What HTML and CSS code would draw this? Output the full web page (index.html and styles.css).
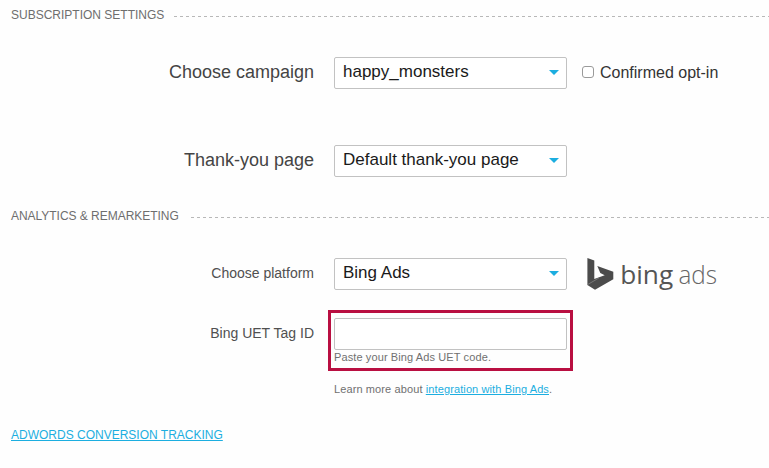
FILE: index.html
```html
<!DOCTYPE html>
<html>

<head>
    <meta charset="utf-8">
    <title>Subscription settings</title>
    <link rel="stylesheet" href="styles.css">
</head>

<body>
    <form autocomplete="off">
        <h2 class="section-title">SUBSCRIPTION SETTINGS</h2>
        <div class="row campaign">
            <label class="name">Choose campaign</label>
            <div class="select">happy_monsters<span class="arrow"></span></div>
            <label class="check"><input type="checkbox" id="optin">Confirmed opt-in</label>
        </div>
        <div class="row thanks">
            <label class="name">Thank-you page</label>
            <div class="select">Default thank-you page<span class="arrow"></span></div>
        </div>

        <h2 class="section-title analytics">ANALYTICS &amp; REMARKETING</h2>
        <div class="row platform small">
            <label class="name">Choose platform</label>
            <div class="select">Bing Ads<span class="arrow"></span></div>
            <svg class="bing" width="134" height="36" viewBox="0 0 134 36">
                <path d="M0.4 1 L7.3 3.6 V22 L17.7 18.2 L13.3 16 L10.3 9 L26.3 14.8 V22.3 L8 32.8 L0.4 28 Z" fill="#4b4b4b"/>
                <path d="M0.6 27.6 L12 20.9" stroke="#8a8a8a" stroke-width="0.7"/>
                <text x="33.2" y="26.5" font-size="25.5" textLength="53" lengthAdjust="spacingAndGlyphs" fill="#555">bing</text>
                <text class="light" x="91.4" y="26.5" font-size="25.5" textLength="38.6" lengthAdjust="spacingAndGlyphs" fill="#666">ads</text>
            </svg>
        </div>
        <div class="row tag small">
            <label class="name" for="uet">Bing UET Tag ID</label>
            <div class="highlight">
                <input type="text" id="uet">
                <p class="hint">Paste your Bing Ads UET code.</p>
            </div>
        </div>
        <p class="hint more">Learn more about <a href="#">integration with Bing Ads</a>.</p>

        <a class="adwords" href="#">ADWORDS CONVERSION TRACKING</a>
    </form>
</body>

</html>
```
FILE: styles.css
```css
body{
    margin: 0;
    background-color: #fefefe;
    color: #444;
    font-family: "Liberation Sans", Arial, sans-serif;
    overflow: hidden;
}

form{
    padding: 5px 0 0 11px;
}

.section-title{
    display: flex;
    align-items: center;
    gap: 10px;
    height: 20px;
    margin: 0;
    font-size: 12px;
    font-weight: normal;
    color: #6e6e6e;
}

.section-title::after{
    content: "";
    flex: 1;
    height: 1px;
    margin-top: 3px;
    background: repeating-linear-gradient(to right, #b8b8b8 0 3px, transparent 3px 6px);
}

.analytics{
    gap: 12px;
    letter-spacing: -0.03px;
}

.row{
    display: flex;
    align-items: flex-start;
}

.campaign{
    margin-top: 32px;
}

.thanks{
    margin-top: 56px;
    margin-bottom: 29px;
}

.platform{
    margin-top: 32px;
    height: 32px;
}

.tag{
    margin-top: 20px;
}

.name{
    width: 303px;
    margin-right: 20px;
    line-height: 30px;
    font-size: 18px;
    text-align: right;
}

.small .name{
    font-size: 14px;
    color: #505050;
}

.tag .name{
    margin-top: 8px;
    margin-right: 14px;
}

.select{
    display: flex;
    align-items: center;
    justify-content: space-between;
    box-sizing: border-box;
    width: 233px;
    height: 32px;
    padding: 0 7px 2px 8px;
    border: 1px solid #c2c2c2;
    border-radius: 2px;
    background-color: #fff;
    font-size: 17px;
    color: #1a1a1a;
}

.arrow{
    border: 5px solid transparent;
    border-top-color: #1caee0;
    border-bottom: none;
}

.check{
    display: flex;
    align-items: center;
    height: 31px;
    margin-left: 15px;
    font-size: 16px;
    color: #333;
}

.check input{
    appearance: none;
    width: 12px;
    height: 12px;
    margin: 0 6px 1px 0;
    border: 1px solid #9a9a9a;
    border-radius: 3px;
    background-color: #fff;
}

.bing{
    margin: -1px 0 0 20px;
    font-family: "Open Sans", sans-serif;
}

.bing .light{
    font-weight: 300;
}

.highlight{
    box-sizing: border-box;
    width: 245px;
    height: 61px;
    padding: 5px 3px;
    border: 3px solid #b90f41;
}

input[type=text]{
    display: block;
    box-sizing: border-box;
    width: 233px;
    height: 32px;
    border: 1px solid #c2c2c2;
    border-radius: 2px;
    background-color: #fff;
}

.hint{
    margin: 0;
    font-size: 11px;
    line-height: 15px;
    letter-spacing: 0.11px;
    color: #707070;
}

.more{
    margin: 11px 0 0 323px;
}

a{
    color: #1caee0;
    text-decoration: underline;
}

.adwords{
    display: inline-block;
    margin-top: 30px;
    font-size: 12px;
    line-height: 16px;
}
```
